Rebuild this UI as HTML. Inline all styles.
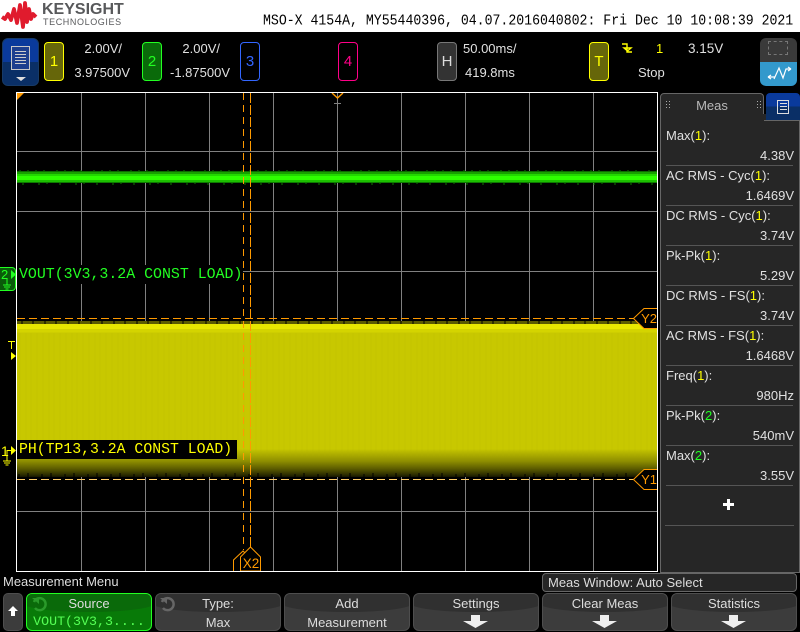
<!DOCTYPE html>
<html><head><meta charset="utf-8">
<style>
html,body{margin:0;padding:0;background:#000}
#p{position:relative;width:800px;height:632px;overflow:hidden;background:#000;font-family:"Liberation Sans",sans-serif;color:#e0e0e0;font-size:13px}
#p div{position:absolute;box-sizing:border-box}
.t{white-space:nowrap;line-height:14px}
.r{text-align:right}
.c{text-align:center}
.ch{width:20px;height:39px;top:42px;border-radius:4px;font-size:15px;text-align:center;line-height:37px;border:1px solid}
.m{font-family:"Liberation Mono",monospace;white-space:nowrap}
.ln{left:666px;width:127px;height:1px;background:#555}
.lbl{left:666px;font-size:13px;white-space:nowrap;line-height:14px;color:#e0e0e0}
.val{right:6px;font-size:13px;white-space:nowrap;line-height:14px;color:#e0e0e0}
.y{color:#ff0}.g{color:#2f2}
.sk{top:593px;width:126px;height:38px;border-radius:6px;background:#3c3c3c;border:1px solid #4e4e4e;overflow:hidden;text-align:center;font-size:13px;line-height:14px;color:#ddd}
.sk i{position:absolute;left:-4px;right:-4px;top:-8px;height:26px;background:#303030;border-radius:0 0 50% 50%/0 0 9px 9px}
.sk span{position:absolute;left:0;right:0}
</style></head><body>
<div id="p">
<!-- header -->
<div style="left:0;top:0;width:800px;height:32px;background:#fff"></div>
<svg style="position:absolute;left:0;top:0" width="40" height="32"><path d="M2 17 L5 19 L8 14 L11 20 L14 9 L17 23 L20 5 L23 27 L25 3 L27 22 L29 9 L31 19 L33 14 L36 17" fill="none" stroke="#e01b2d" stroke-width="3.800" stroke-linejoin="round"/></svg>
<div class="t" style="left:42px;top:1px;font-size:16px;line-height:18px;font-weight:bold;color:#58595b">KEYSIGHT</div>
<div class="t" style="left:43px;top:17px;font-size:9px;line-height:11px;color:#58595b;letter-spacing:.6px">TECHNOLOGIES</div>
<div class="m" style="left:263px;top:13px;font-size:13.200px;line-height:15px;color:#000;transform:scaleY(1.12);transform-origin:0 50%">MSO-X 4154A, MY55440396, 04.07.2016040802: Fri Dec 10 10:08:39 2021</div>

<!-- top bar -->
<div style="left:2px;top:38px;width:37px;height:48px;border-radius:6px;background:linear-gradient(#0a3a9c 0 50%,#0a2f66 50%);border:1px solid #173a66"></div>
<div style="left:11px;top:46px;width:19px;height:24px;background:#1d3f8e;border:1px solid #c8c8c8"></div>
<div style="left:15px;top:51px;width:11px;height:14px;background:repeating-linear-gradient(#ccc 0 1px,transparent 1px 3px)"></div>
<svg style="position:absolute;left:15px;top:76px" width="12" height="6"><path d="M1 1H11L6 5Z" fill="#ddd"/></svg>

<div class="ch" style="left:44px;background:#66660a;border-color:#ff0;color:#ff0">1</div>
<div class="t r" style="left:62px;width:60px;top:42px">2.00V/</div>
<div class="t r" style="left:60px;width:70px;top:66px">3.97500V</div>
<div class="ch" style="left:142px;background:#0a6a0a;border-color:#2f2;color:#2f2">2</div>
<div class="t r" style="left:160px;width:60px;top:42px">2.00V/</div>
<div class="t r" style="left:160px;width:70px;top:66px">-1.87500V</div>
<div class="ch" style="left:240px;border-color:#36f;color:#36f">3</div>
<div class="ch" style="left:338px;border-color:#f08;color:#f08">4</div>
<div class="ch" style="left:437px;background:#333;border-color:#777;color:#ddd">H</div>
<div class="t" style="left:463px;top:42px">50.00ms/</div>
<div class="t" style="left:465px;top:66px">419.8ms</div>
<div class="ch" style="left:589px;background:#66660a;border-color:#ff0;color:#ff0">T</div>
<svg style="position:absolute;left:621px;top:43px" width="12" height="12"><path d="M1 1H6V9H11M3 5H10L6.500 8Z" fill="none" stroke="#ff0" stroke-width="1.400"/></svg>
<div class="t y" style="left:656px;top:42px">1</div>
<div class="t" style="left:688px;top:42px;font-size:13.500px">3.15V</div>
<div class="t" style="left:638px;top:66px">Stop</div>
<div style="left:760px;top:38px;width:37px;height:24px;background:#3a3a3a;border-radius:6px 6px 0 0"></div>
<div style="left:768px;top:41px;width:20px;height:14px;border:1px dashed #777"></div>
<div style="left:760px;top:62px;width:37px;height:24px;background:#3399cc;border-radius:0 0 6px 6px"></div>
<svg style="position:absolute;left:766px;top:65px" width="26" height="16"><path d="M2 12H9M2 12l3-2M2 12l3 2M8 14L13 3L17 13L20 4H25M25 4l-3-2M25 4l-3 2" fill="none" stroke="#fff" stroke-width="1.200"/></svg>

<!-- graticule -->
<svg style="position:absolute;left:0;top:0" width="800" height="632">
<g stroke="#808080" stroke-width="1">
<path d="M81.500 93V571M145.500 93V571M209.500 93V571M273.500 93V571M337.500 93V571M401.500 93V571M465.500 93V571M529.500 93V571M593.500 93V571"/>
<path d="M17 151.500H657M17 211.500H657M17 271.500H657M17 331.500H657M17 391.500H657M17 451.500H657M17 511.500H657"/>
</g>
</svg>

<!-- green trace -->
<div style="left:17px;top:171px;width:641px;height:12px;background:linear-gradient(#0c6a00 0 1px,#18a000 1px 3px,#22d800 3px 5px,#2eff00 5px 9px,#1cc000 9px 11px,#0e7a00 11px)"></div>
<svg style="position:absolute;left:17px;top:169px" width="641" height="17">
<defs><pattern id="gn" width="37" height="17" patternUnits="userSpaceOnUse"><path d="M3 1V2M11 1V2M19 1V2M27 1V2M6 14V16M22 14V16M30 14V15" stroke="#0e7a00" stroke-width="1"/></pattern></defs>
<rect width="641" height="17" fill="url(#gn)"/></svg>

<!-- yellow trace -->
<div style="left:17px;top:321px;width:641px;height:156px;background:linear-gradient(#5c5c00 0 3px,#e8e800 3px 8px,#d4d400 8px 11px,#c8c800 12px 128px,#b8b800 131px,#8f8f00 140px,#5a5a00 148px,#2a2a00 154px,#141400 156px)"></div>
<svg style="position:absolute;left:17px;top:321px" width="641" height="156">
<defs>
<pattern id="yn" width="23" height="156" patternUnits="userSpaceOnUse"><path d="M3 12V135M9 12V135M14 12V135M20 12V135" stroke="#b0b000" stroke-opacity=".22" stroke-width="1"/><path d="M5 0V3M16 0V3M11 152V156M2 153V156" stroke="#000" stroke-width="1"/></pattern>
</defs>
<rect width="641" height="156" fill="url(#yn)"/></svg>

<!-- label backgrounds -->
<div style="left:17px;top:265px;width:226px;height:19px;background:#000"></div>
<div style="left:17px;top:440px;width:220px;height:19px;background:#000"></div>

<!-- cursors -->
<svg style="position:absolute;left:0;top:0" width="800" height="632" fill="none">
<path d="M17 318.500H640" stroke="#ff9a00" stroke-dasharray="8 4"/>
<path d="M17 479.500H640" stroke="#ffcc66" stroke-dasharray="8 4"/>
<path d="M243.500 93V550" stroke="#ff9a00" stroke-dasharray="7 5"/>
<path d="M250.500 93V547" stroke="#ff9a00" stroke-dasharray="10 2"/>
<path d="M658 308.500H644L633.500 318.500L644 328.500H658" fill="#000" stroke="#ff9a00"/>
<path d="M658 469.500H644L633.500 479.500L644 489.500H658" fill="#000" stroke="#ff9a00"/>
<path d="M233.500 571V560L243 551L250 558V571" fill="#000" stroke="#ff9a00"/>
<path d="M240.500 571V557L250.500 547L260.500 557V571Z" fill="#000" stroke="#ff9a00"/>
<path d="M17 93V100L24 93Z" fill="#ff9a00"/>
<path d="M332 93L337.500 98L343 93" stroke="#ff9a00" stroke-width="1.400"/>
<path d="M334 103.500H341" stroke="#808080"/>
<path d="M11 352V360L16 356Z" fill="#ff0"/>
<path d="M8 341.500H15M11.500 342V349" stroke="#ff0"/>
</svg>
<div class="t" style="left:634px;top:312px;width:23px;text-align:right;color:#ff9a00;font-size:13px">Y2</div>
<div class="t" style="left:634px;top:473px;width:23px;text-align:right;color:#ff9a00;font-size:13px">Y1</div>
<div class="t" style="left:241px;top:557px;width:20px;text-align:center;color:#ff9a00;font-size:13.500px">X2</div>

<!-- frame -->
<div style="left:16px;top:92px;width:642px;height:480px;border:1px solid #fff"></div>

<!-- labels -->
<div class="m" style="left:19px;top:267px;font-size:14.900px;line-height:16px;color:#2f2">VOUT(3V3,3.2A CONST LOAD)</div>
<div class="m" style="left:19px;top:442px;font-size:14.800px;line-height:16px;color:#ff0">PH(TP13,3.2A CONST LOAD)</div>
<div style="left:0;top:267px;width:16px;height:24px;background:#0a5a0a;border:1px solid #2f2;border-left:0;border-radius:0 4px 4px 0"></div>
<div class="t g" style="left:1px;top:268px;font-size:13px">2</div>
<svg style="position:absolute;left:0;top:267px" width="17" height="24" fill="none"><path d="M11 3V12L16 7.500Z" fill="#2f2"/><path d="M7 11V18M3 18H11M4 20H10M5.500 22H8.500" stroke="#2f2"/></svg>
<div class="t y" style="left:1px;top:444px;font-size:14px">1</div>
<svg style="position:absolute;left:0;top:443px" width="17" height="24" fill="none"><path d="M11 3V12L16 7.500Z" fill="#ff0"/><path d="M11 7.500H7V18M3 18H11M4 20H10M5.500 22H8.500" stroke="#ff0"/></svg>

<!-- right panel -->
<div style="left:660px;top:93px;width:104px;height:30px;background:#262626;border:1px solid #666;border-bottom:0;border-radius:4px 4px 0 0"></div>
<div style="left:660px;top:120px;width:140px;height:453px;background:#262626;border:1px solid #666;border-top:0"></div>
<div style="left:661px;top:114px;width:110px;height:10px;background:#262626"></div>
<div style="left:764px;top:120px;width:36px;height:1px;background:#666"></div>
<div style="left:766px;top:93px;width:34px;height:27px;background:linear-gradient(#0a3a9c 0 50%,#0a2f66 50%);border-radius:4px 4px 0 0"></div>
<div style="left:777px;top:100px;width:12px;height:14px;border:1px solid #ddd;background:repeating-linear-gradient(#ddd 0 1px,transparent 1px 3px) 2px 2px/7px 9px no-repeat"></div>
<div class="t c" style="left:664px;width:96px;top:99px;font-size:13px;color:#b8b8b8">Meas</div>
<svg style="position:absolute;left:666px;top:101px" width="100" height="10" fill="#aaa"><path d="M0 0h1v1H0zM3 0h1v1H3zM0 3h1v1H0zM3 3h1v1H3zM0 6h1v1H0zM3 6h1v1H3zM91 0h1v1h-1zM94 0h1v1h-1zM91 3h1v1h-1zM94 3h1v1h-1zM91 6h1v1h-1zM94 6h1v1h-1z"/></svg>

<div class="lbl" style="top:129px">Max(<span class="y">1</span>):</div><div class="val" style="top:149px">4.38V</div><div class="ln" style="top:165px"></div>
<div class="lbl" style="top:169px">AC RMS - Cyc(<span class="y">1</span>):</div><div class="val" style="top:189px">1.6469V</div><div class="ln" style="top:205px"></div>
<div class="lbl" style="top:209px">DC RMS - Cyc(<span class="y">1</span>):</div><div class="val" style="top:229px">3.74V</div><div class="ln" style="top:245px"></div>
<div class="lbl" style="top:249px">Pk-Pk(<span class="y">1</span>):</div><div class="val" style="top:269px">5.29V</div><div class="ln" style="top:285px"></div>
<div class="lbl" style="top:289px">DC RMS - FS(<span class="y">1</span>):</div><div class="val" style="top:309px">3.74V</div><div class="ln" style="top:325px"></div>
<div class="lbl" style="top:329px">AC RMS - FS(<span class="y">1</span>):</div><div class="val" style="top:349px">1.6468V</div><div class="ln" style="top:365px"></div>
<div class="lbl" style="top:369px">Freq(<span class="y">1</span>):</div><div class="val" style="top:389px">980Hz</div><div class="ln" style="top:405px"></div>
<div class="lbl" style="top:409px">Pk-Pk(<span class="g">2</span>):</div><div class="val" style="top:429px">540mV</div><div class="ln" style="top:445px"></div>
<div class="lbl" style="top:449px">Max(<span class="g">2</span>):</div><div class="val" style="top:469px">3.55V</div><div class="ln" style="top:485px"></div>
<svg style="position:absolute;left:723px;top:499px" width="11" height="11"><path d="M4 0H7V4H11V7H7V11H4V7H0V4H4Z" fill="#fff"/></svg>
<div class="ln" style="left:665px;width:129px;top:525px"></div>

<!-- bottom -->
<div class="t" style="left:3px;top:575px;font-size:13px;color:#ddd">Measurement Menu</div>
<div class="t" style="left:542px;top:573px;width:255px;height:19px;background:#262626;border:1px solid #666;border-radius:4px;padding-left:5px;line-height:17px;color:#ddd;font-size:13px">Meas Window: Auto Select</div>

<div style="left:3px;top:593px;width:20px;height:38px;background:#3c3c3c;border:1px solid #4e4e4e;border-radius:5px"></div>
<svg style="position:absolute;left:7px;top:605px" width="12" height="12"><path d="M6 1L11 6H8V11H4V6H1Z" fill="#fff"/></svg>

<div class="sk" style="left:26px;background:#087a08;border-color:#2f2;color:#ddd"><i style="background:#0a6a0a"></i>
<span style="top:3px">Source</span></div>
<div class="m" style="left:26px;width:126px;top:615px;text-align:center;font-size:13.300px;line-height:14px;color:#5f5">VOUT(3V3,3....</div>
<svg style="position:absolute;left:30px;top:595px" width="18" height="18" fill="none"><path d="M4 7A6 6 0 1 1 5 13" stroke="#2a9a2a" stroke-width="2.500"/><path d="M2 3H9V9Z" fill="#2a9a2a"/></svg>

<div class="sk" style="left:155px"><i></i><span style="top:3px">Type:</span><span style="top:22px">Max</span></div>
<svg style="position:absolute;left:158px;top:595px" width="18" height="18" fill="none"><path d="M4 7A6 6 0 1 1 5 13" stroke="#666" stroke-width="2.500"/><path d="M2 3H9V9Z" fill="#666"/></svg>
<div class="sk" style="left:284px"><i></i><span style="top:3px">Add</span><span style="top:22px">Measurement</span></div>
<div class="sk" style="left:413px"><i></i><span style="top:3px">Settings</span></div>
<div class="sk" style="left:542px"><i></i><span style="top:3px">Clear Meas</span></div>
<div class="sk" style="left:671px"><i></i><span style="top:3px">Statistics</span></div>
<svg style="position:absolute;left:0;top:0;pointer-events:none" width="800" height="632">
<path d="M471 615H480V621H488L475.500 628L463 621H471Z" fill="#eee"/>
<path d="M600 615H609V621H617L604.500 628L592 621H600Z" fill="#eee"/>
<path d="M729 615H738V621H746L733.500 628L721 621H729Z" fill="#eee"/>
</svg>
</div>
</body></html>
